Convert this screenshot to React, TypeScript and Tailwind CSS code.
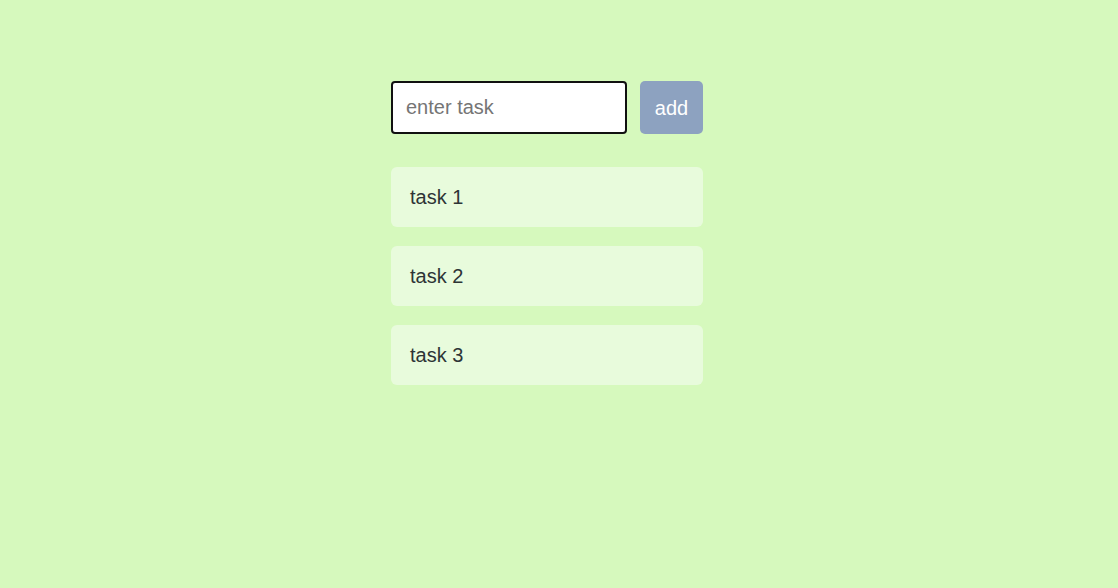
import React from "react";

export default function App() {
  const tasks = ["task 1", "task 2", "task 3"];
  return (
    <div
      className="min-h-[588px] w-full bg-[#d6f9bd] pt-[81px]"
      style={{ fontFamily: '"Liberation Sans", Arial, sans-serif' }}
    >
      <div className="mx-auto w-[336px]">
        <div className="flex w-[312px] items-center justify-between">
          <input
            placeholder="enter task"
            className="h-[53px] w-[236px] rounded-[4px] border-2 border-[#111] bg-white px-[13px] text-[20px] text-[#2d3436] outline-none placeholder:text-[#757575]"
          />
          <button className="h-[53px] w-[63px] rounded-[5px] bg-[#8da2c0] text-[20px] text-white">
            add
          </button>
        </div>
        <div className="mt-[33px] flex w-[312px] flex-col gap-[19px]">
          {tasks.map((t) => (
            <div
              key={t}
              className="flex h-[60px] items-center rounded-[6px] bg-[#e8fbdc] px-[19px] pb-[1px] text-[20px] text-[#2d3436]"
            >
              {t}
            </div>
          ))}
        </div>
      </div>
    </div>
  );
}
